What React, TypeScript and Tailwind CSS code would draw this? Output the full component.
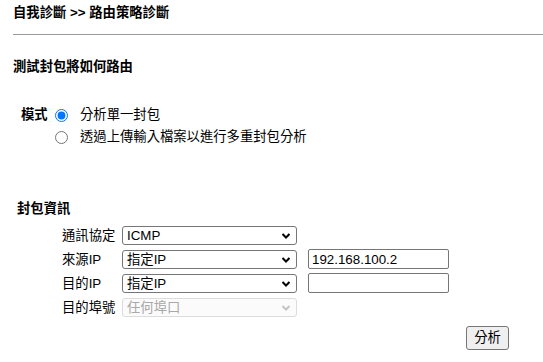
import React from "react";

const Chevron = ({ disabled }: { disabled?: boolean }) => (
  <svg
    className="pointer-events-none absolute right-[6px] top-1/2 -translate-y-1/2"
    width="10"
    height="7"
    viewBox="0 0 10 7"
  >
    <polyline
      points="1.5,1.5 5,5 8.5,1.5"
      fill="none"
      stroke={disabled ? "#c4c4c4" : "#000"}
      strokeWidth="2"
    />
  </svg>
);

const Select = ({ value, disabled }: { value: string; disabled?: boolean }) => (
  <div className="relative w-[175px] h-[19px]">
    <select
      disabled={disabled}
      defaultValue={value}
      className={
        "appearance-none w-full h-full rounded-[3px] border pl-[4px] pr-[20px] text-[13.33px] leading-[17px] outline-none " +
        (disabled
          ? "border-[#dcdcdc] bg-[#fbfbfb] text-[#a8a8a8]"
          : "border-[#767676] bg-white text-black")
      }
    >
      <option>{value}</option>
    </select>
    <Chevron disabled={disabled} />
  </div>
);

const TextInput = ({ value }: { value: string }) => (
  <input
    type="text"
    defaultValue={value}
    className="w-[141px] h-[20px] rounded-[2px] border border-[#767676] bg-white px-[3px] text-[13.33px] leading-[18px] text-black outline-none"
  />
);

export default function App() {
  const font = {
    fontFamily:
      '"Liberation Sans", Arial, "Noto Sans CJK TC", "Noto Sans CJK SC", sans-serif',
  };
  return (
    <div
      className="w-[543px] h-[362px] bg-white text-black text-[13.33px] overflow-hidden"
      style={font}
    >
      <div className="flex flex-col pl-[13px]">
        <div className="mt-[5px] leading-[16px] font-bold">自我診斷 &gt;&gt; 路由策略診斷</div>
        <div className="mt-[13px] h-px bg-[#9a9a9a]" />
        <div className="mt-[24px] leading-[16px] font-bold">測試封包將如何路由</div>

        <div className="mt-[30px] flex flex-col gap-[2px] pl-[8px]">
          <div className="flex items-center h-[20px]">
            <span className="font-bold w-[34px]">模式</span>
            <input type="radio" name="mode" defaultChecked className="m-0 w-[13px] h-[13px]" />
            <span className="ml-[12px]">分析單一封包</span>
          </div>
          <div className="flex items-center h-[20px]">
            <span className="w-[34px]" />
            <input type="radio" name="mode" className="m-0 w-[13px] h-[13px]" />
            <span className="ml-[12px]">透過上傳輸入檔案以進行多重封包分析</span>
          </div>
        </div>

        <div className="mt-[54px] pl-[4px] leading-[16px] font-bold">封包資訊</div>

        <div className="mt-[9px] flex flex-col gap-[5px] pl-[49px]">
          <div className="flex items-center h-[19px]">
            <span className="w-[60px]">通訊協定</span>
            <Select value="ICMP" />
          </div>
          <div className="flex items-center h-[19px]">
            <span className="w-[60px]">來源IP</span>
            <Select value="指定IP" />
            <div className="ml-[11px]">
              <TextInput value="192.168.100.2" />
            </div>
          </div>
          <div className="flex items-center h-[19px]">
            <span className="w-[60px]">目的IP</span>
            <Select value="指定IP" />
            <div className="ml-[11px]">
              <TextInput value="" />
            </div>
          </div>
          <div className="flex items-center h-[19px]">
            <span className="w-[60px]">目的埠號</span>
            <Select value="任何埠口" disabled />
          </div>
        </div>

        <div className="mt-[9px] flex pl-[453px]">
          <button className="w-[43px] h-[24px] rounded-[3px] border border-[#767676] bg-[#efefef] text-[13.33px] leading-[22px]">
            分析
          </button>
        </div>
      </div>
    </div>
  );
}
